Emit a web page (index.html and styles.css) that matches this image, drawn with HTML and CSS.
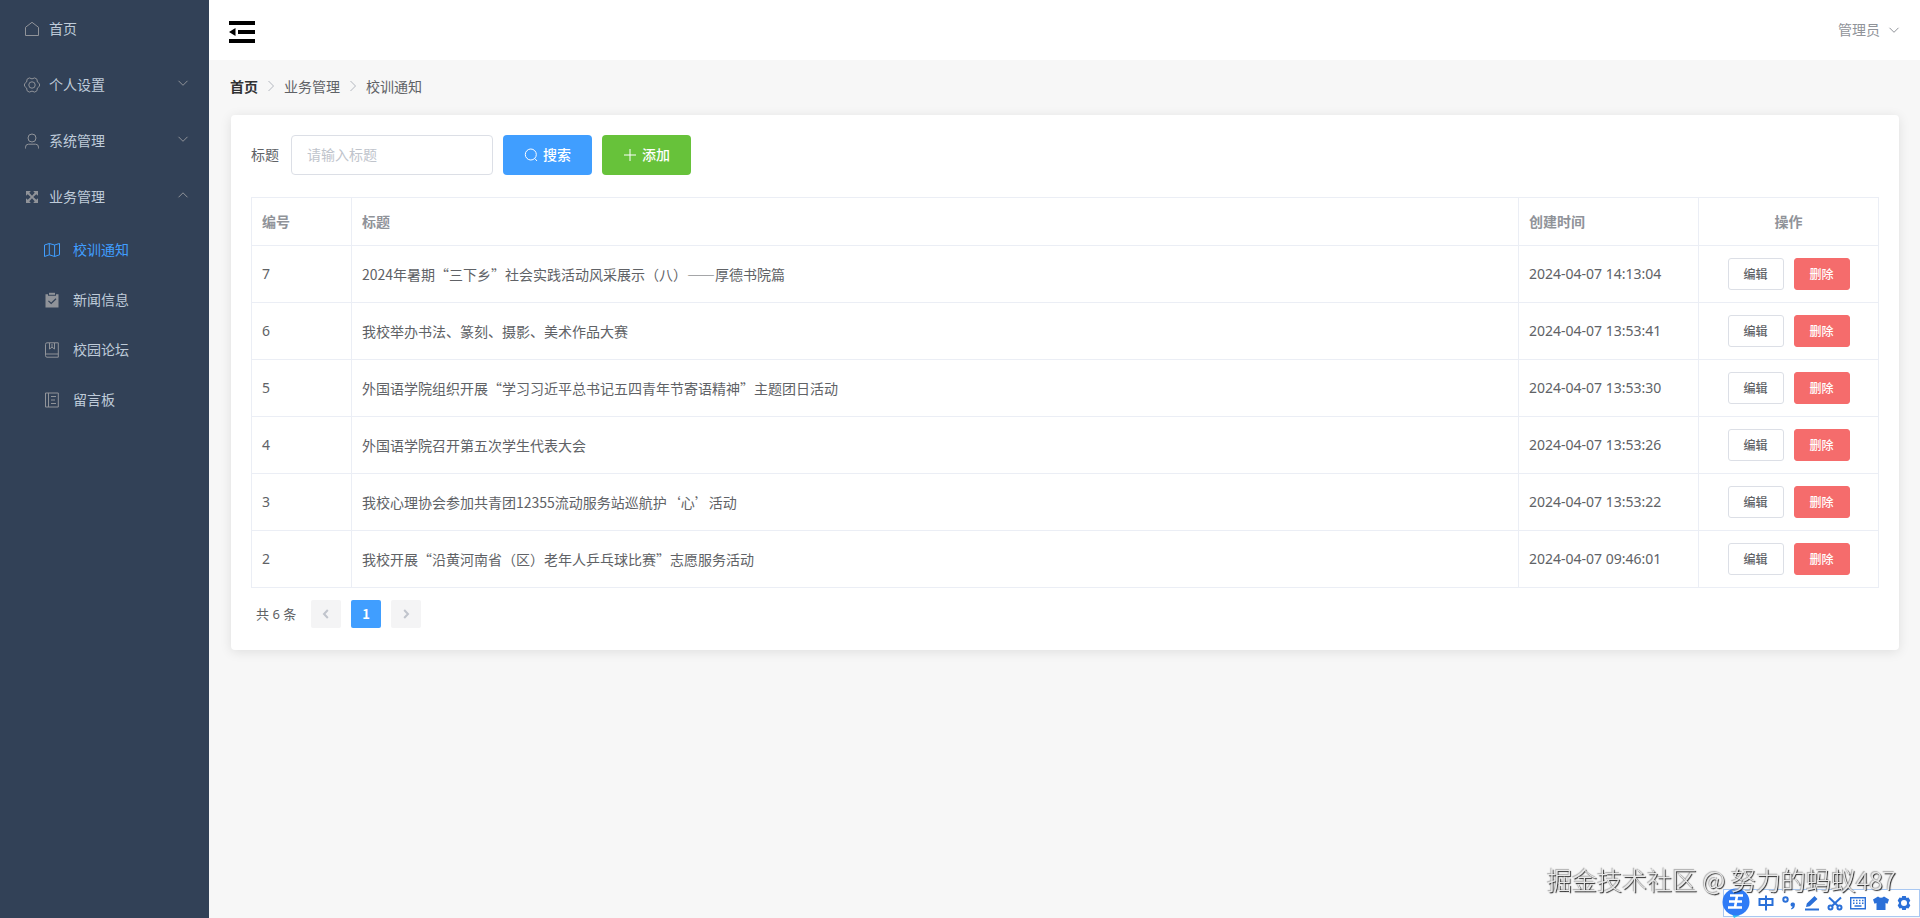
FILE: index.html
```html
<!DOCTYPE html>
<html lang="zh-CN">
<head>
<meta charset="utf-8">
<title>校训通知</title>
<link rel="stylesheet" href="styles.css">
</head>
<body>
<div class="app">
  <aside class="sidebar">
    <nav class="menu">
      <a class="menu-item" href="#home">
        <svg class="icon" viewBox="0 0 16 16"><path d="M1.500 14.500V6.300L8 1.300l6.500 5v8.200z"/></svg>
        <span>首页</span>
      </a>
      <button class="menu-item" type="button" aria-expanded="false">
        <svg class="icon" viewBox="0 0 16 16"><path d="M5.300.9 8 1.900l2.700-1 2.200 1.300.5 2.800 2.100 1.800v2.400l-2.100 1.800-.5 2.800-2.200 1.300-2.700-1-2.700 1-2.200-1.300-.5-2.800L.5 9.200V6.800L2.600 5l.5-2.800z"/><circle cx="8" cy="8" r="3.200"/></svg>
        <span>个人设置</span>
        <svg class="arrow" viewBox="0 0 12 12"><path d="M1.500 3.800 6 8.300l4.500-4.500"/></svg>
      </button>
      <button class="menu-item" type="button" aria-expanded="false">
        <svg class="icon" viewBox="0 0 16 16"><circle cx="8" cy="5" r="4"/><path d="M1.500 15.500v-1.300a3 3 0 0 1 3-3h7a3 3 0 0 1 3 3v1.300"/></svg>
        <span>系统管理</span>
        <svg class="arrow" viewBox="0 0 12 12"><path d="M1.500 3.800 6 8.300l4.500-4.500"/></svg>
      </button>
      <button class="menu-item" type="button" aria-expanded="true">
        <svg class="icon solid" viewBox="0 0 16 16"><path d="M2 2h4.800L5.300 3.700 8 6.700l2.700-3L9.200 2H14v4.800l-1.700-1.500L9.300 8l3 2.700L14 9.200V14H9.200l1.500-1.700L8 9.300l-2.700 3L6.800 14H2V9.200l1.700 1.500L6.700 8l-3-2.700L2 6.800z"/></svg>
        <span>业务管理</span>
        <svg class="arrow" viewBox="0 0 12 12"><path d="m1.500 8.300 4.500-4.500 4.500 4.500"/></svg>
      </button>
      <div class="submenu">
        <a class="sub-item active" href="#motto">
          <svg class="icon" viewBox="0 0 16 16"><path d="M.5 3 5.300 1.500 10.600 3l4.900-1.500v11.300l-4.900 1.700-5.300-1.700L.5 14.500zM5.300 1.500v11.300M10.600 3v11.500"/></svg>
          <span>校训通知</span>
        </a>
        <a class="sub-item" href="#news">
          <svg class="icon solid" viewBox="0 0 16 16"><path fill-rule="evenodd" d="M1.500 2.300H4v1.500h8V2.300h2.500v13.200h-13zM4.800 8.400 4 9.200l3.200 3 5.200-5-.8-.9-4.400 4.200z"/><path d="M5 .8h6v2H5z"/></svg>
          <span>新闻信息</span>
        </a>
        <a class="sub-item" href="#forum">
          <svg class="icon" viewBox="0 0 16 16"><path d="M3 .8h11.300v14.400H3a1.500 1.500 0 0 1-1.500-1.500V2.300A1.500 1.500 0 0 1 3 .8zM1.500 12h12.800M5.500 1v6L8 5.200 10.500 7V1M8 2v3"/></svg>
          <span>校园论坛</span>
        </a>
        <a class="sub-item" href="#board">
          <svg class="icon" viewBox="0 0 16 16"><path d="M1.500 1h12.800v14H1.500zM4.500 1v14M7 4.500h5M7 8h4M7 11.500h5"/></svg>
          <span>留言板</span>
        </a>
      </div>
    </nav>
  </aside>
  <div class="main">
    <header class="topbar">
      <button class="fold" type="button" aria-label="折叠菜单">
        <svg viewBox="0 0 26 22"><path d="M0 0h26v4H0zM9 9h17v4H9zM0 18h26v4H0zM0 11l6.500-4v8z"/></svg>
      </button>
      <button class="user" type="button">
        <span>管理员</span>
        <svg class="arrow" viewBox="0 0 12 12"><path d="M1.500 3.800 6 8.300l4.500-4.500"/></svg>
      </button>
    </header>
    <main class="content">
      <nav class="breadcrumb">
        <a class="root" href="#home">首页</a>
        <svg viewBox="0 0 14 14"><path d="m4.500 2 5 5-5 5"/></svg>
        <span>业务管理</span>
        <svg viewBox="0 0 14 14"><path d="m4.500 2 5 5-5 5"/></svg>
        <span>校训通知</span>
      </nav>
      <section class="card">
        <form class="search">
          <label for="title">标题</label>
          <input id="title" type="text" placeholder="请输入标题">
          <button class="btn primary" type="button">
            <svg viewBox="0 0 14 14"><circle cx="6.800" cy="6.500" r="5.500"/><path d="m10.800 10.500 2.200 2.500"/></svg><span>搜索</span>
          </button>
          <button class="btn success" type="button">
            <svg viewBox="0 0 14 14"><path d="M7 1v12M1 7h12"/></svg><span>添加</span>
          </button>
        </form>
        <table class="grid">
          <colgroup><col class="c-id"><col><col class="c-time"><col class="c-ops"></colgroup>
          <thead><tr><th>编号</th><th>标题</th><th>创建时间</th><th class="ops">操作</th></tr></thead>
          <tbody>
            <tr><td class="num">7</td><td>2024年暑期“三下乡”社会实践活动风采展示（八）——厚德书院篇</td><td class="num">2024-04-07 14:13:04</td><td class="ops"><div class="actions"><button class="mini" type="button">编辑</button><button class="mini danger" type="button">删除</button></div></td></tr>
            <tr><td class="num">6</td><td>我校举办书法、篆刻、摄影、美术作品大赛</td><td class="num">2024-04-07 13:53:41</td><td class="ops"><div class="actions"><button class="mini" type="button">编辑</button><button class="mini danger" type="button">删除</button></div></td></tr>
            <tr><td class="num">5</td><td>外国语学院组织开展“学习习近平总书记五四青年节寄语精神”主题团日活动</td><td class="num">2024-04-07 13:53:30</td><td class="ops"><div class="actions"><button class="mini" type="button">编辑</button><button class="mini danger" type="button">删除</button></div></td></tr>
            <tr><td class="num">4</td><td>外国语学院召开第五次学生代表大会</td><td class="num">2024-04-07 13:53:26</td><td class="ops"><div class="actions"><button class="mini" type="button">编辑</button><button class="mini danger" type="button">删除</button></div></td></tr>
            <tr><td class="num">3</td><td>我校心理协会参加共青团12355流动服务站巡航护‘心’活动</td><td class="num">2024-04-07 13:53:22</td><td class="ops"><div class="actions"><button class="mini" type="button">编辑</button><button class="mini danger" type="button">删除</button></div></td></tr>
            <tr><td class="num">2</td><td>我校开展“沿黄河南省（区）老年人乒乓球比赛”志愿服务活动</td><td class="num">2024-04-07 09:46:01</td><td class="ops"><div class="actions"><button class="mini" type="button">编辑</button><button class="mini danger" type="button">删除</button></div></td></tr>
          </tbody>
        </table>
        <div class="pager">
          <span class="total">共 6 条</span>
          <button type="button" disabled aria-label="上一页"><svg viewBox="0 0 12 12"><path d="M7.800 2 4 6l3.800 4"/></svg></button>
          <button class="current" type="button">1</button>
          <button type="button" disabled aria-label="下一页"><svg viewBox="0 0 12 12"><path d="M4.200 2 8 6l-3.800 4"/></svg></button>
        </div>
      </section>
    </main>
  </div>
</div>
<div class="ime">
  <svg class="ime-logo" viewBox="0 0 28 30"><path fill="#2fc0f5" d="M10 26l2 4 6-3z"/><circle cx="14" cy="14" r="13.500" fill="#2f7bf6"/><path d="M8 7.500h13M7 13.500h13M6 19.500h14M15 7.500l-2 12" stroke="#fff" stroke-width="2.600" fill="none"/></svg>
  <svg viewBox="0 0 16 16"><path d="M1.500 4h13v6h-13zM8 .5v15"/></svg>
  <svg viewBox="0 0 16 16"><circle cx="4.500" cy="4.500" r="2.200"/><path class="fill" d="M9.500 9.500a2.200 2.200 0 1 1 4.300.8c0 2-1.300 3.600-3.300 4.200l-.5-1c1-.5 1.500-1.100 1.500-1.900-1.200 0-2-.9-2-2.100z"/></svg>
  <svg viewBox="0 0 16 16"><path class="fill" d="M2 12l.8-3.500L10.500 1l3 3-7.700 7.300zM1 13.500h14v2H1z"/></svg>
  <svg viewBox="0 0 16 16"><circle cx="3.500" cy="12.500" r="2"/><circle cx="12.500" cy="12.500" r="2"/><path d="M2 2.500 11 11M14 2.500 5 11"/></svg>
  <svg viewBox="0 0 16 16"><path class="thin" d="M.7 2.700h14.600v11H.7z"/><path class="thin" d="M3 5.500h1.500M6 5.500h1.500M9 5.500h1.500M12 5.500h1.500M3 8.200h1.500M6 8.200h1.500M9 8.200h1.500M12 8.200h1.500M4.500 11h7"/></svg>
  <svg viewBox="0 0 16 16"><path class="fill" d="M5 1.500q3 2.500 6 0l5 3-1.500 4.300-2-.8v7h-9V8l-2 .8L0 4.500z"/></svg>
  <svg viewBox="0 0 16 16"><path class="fill" fill-rule="evenodd" d="M6.200 1h3.600l.6 2 2.100-.5 1.800 3.100L12.900 8l1.400 2.400-1.800 3.100-2.100-.5-.6 2H6.200l-.6-2-2.100.5-1.800-3.100L3.100 8 1.700 5.600l1.800-3.100 2.100.5zM8 5a3 3 0 1 0 0 6 3 3 0 0 0 0-6z"/></svg>
</div>
<div class="watermark">掘金技术社区 @ 努力的蚂蚁487</div>
</body>
</html>
```
FILE: styles.css
```css
* { box-sizing: border-box; }

body {
  margin: 0;
  color: #606266;
  background: #f7f7f7;
  font: 14px/20px "Noto Sans CJK SC", sans-serif;
}

button, input { font: inherit; color: inherit; }
button { margin: 0; border: 0; background: none; cursor: pointer; }
a { color: inherit; text-decoration: none; }
svg { display: block; flex: none; fill: none; stroke: currentColor; stroke-width: 1; }

.app { display: flex; min-height: 100vh; }

.sidebar { flex: none; width: 209px; padding-top: 1px; background: #324157; color: #bfcbd9; }
.menu, .submenu { display: flex; flex-direction: column; }
.menu span, .user span, .btn span { padding-bottom: 2px; }
.menu-item { display: flex; align-items: center; gap: 9px; height: 56px; padding: 0 20px 0 24px; text-align: left; }
.icon { width: 16px; height: 16px; color: #909399; }
.icon.solid { fill: currentColor; stroke: none; }
.arrow { width: 12px; height: 12px; color: #909399; }
.menu-item .arrow { margin: 0 0 4px auto; }
.sub-item { display: flex; align-items: center; gap: 13px; height: 50px; padding: 0 20px 0 44px; }
.sub-item.active, .active .icon { color: #409eff; }

.main { flex: 1; min-width: 0; }
.topbar { display: flex; align-items: center; justify-content: space-between; height: 60px; padding: 0 20px; background: #fff; }
.fold { padding: 4px 0 0; }
.fold svg { width: 26px; height: 22px; fill: #000; stroke: none; }
.user { display: flex; align-items: center; gap: 8px; padding: 0; color: #909399; }

.content { padding: 16px 21px 20px 22px; }
.breadcrumb { display: flex; align-items: center; gap: 6px; margin: 0 0 19px -1px; }
.breadcrumb .root { color: #303133; font-weight: 700; }
.breadcrumb svg { width: 14px; height: 14px; color: #b4b8c0; }

.card { padding: 20px 20px 22px; border-radius: 4px; background: #fff; box-shadow: 0 2px 12px rgba(0, 0, 0, .1); }

.search { display: flex; align-items: center; gap: 10px; margin-bottom: 22px; }
.search label { padding: 0 2px 2px 0; }
.search input { width: 202px; height: 40px; padding: 0 15px 2px; border: 1px solid #dcdfe6; border-radius: 4px; background: #fff; outline: none; }
.search input::placeholder { color: #c0c4cc; opacity: 1; }
.btn { display: flex; align-items: center; justify-content: center; gap: 5px; width: 89px; height: 40px; padding: 0; border-radius: 4px; color: #fff; font-weight: 500; }
.btn svg { width: 14px; height: 14px; }
.primary { background: #409eff; }
.success { background: #67c23a; }

.grid { width: 100%; table-layout: fixed; border-collapse: collapse; }
.c-id { width: 100px; }
.c-time, .c-ops { width: 180px; }
.grid th, .grid td { padding: 0 10px; border: 1px solid #ebeef5; text-align: left; }
.grid th { height: 48px; padding-bottom: 2px; color: #909399; font-weight: 700; }
.grid td { height: 57px; }
.grid .ops { text-align: center; }
.num { font-family: "Noto Sans", sans-serif; }
.actions { display: flex; justify-content: center; gap: 10px; }
.mini { width: 56px; height: 32px; padding: 0; border: 1px solid #dcdfe6; border-radius: 3px; background: #fff; font-size: 12px; font-weight: 500; }
.danger { border-color: #f56c6c; background: #f56c6c; color: #fff; }

.pager { display: flex; align-items: center; gap: 10px; margin-top: 12px; padding-left: 5px; font-size: 13px; }
.total { margin-right: 5px; font-family: "Noto Sans", "Noto Sans CJK SC", sans-serif; }
.pager button { display: flex; align-items: center; justify-content: center; width: 30px; height: 28px; padding: 0; border-radius: 2px; background: #f4f4f5; color: #c0c4cc; }
.pager svg { width: 12px; height: 12px; stroke-width: 2; }
.pager .current { background: #409eff; color: #fff; font-weight: 700; }

.ime { position: fixed; right: 0; bottom: 1px; display: flex; align-items: center; gap: 7px; height: 28px; padding: 0 7px 0 34px; border: 1px solid #a9c8f2; background: #fff; color: #2b70d8; }
.ime svg { width: 16px; height: 16px; stroke-width: 2; }
.ime .fill { fill: currentColor; stroke: none; }
.ime .thin { stroke-width: 1.4; }
.ime .ime-logo { position: absolute; left: -2px; bottom: -2px; width: 28px; height: 30px; stroke: none; }
.watermark { position: fixed; right: 24px; bottom: 21px; color: #e8e8e8; font-size: 25px; font-weight: 300; line-height: 36px; text-shadow: 1px 1px 1px #222, -1px -1px 1px #aaa; }
```
